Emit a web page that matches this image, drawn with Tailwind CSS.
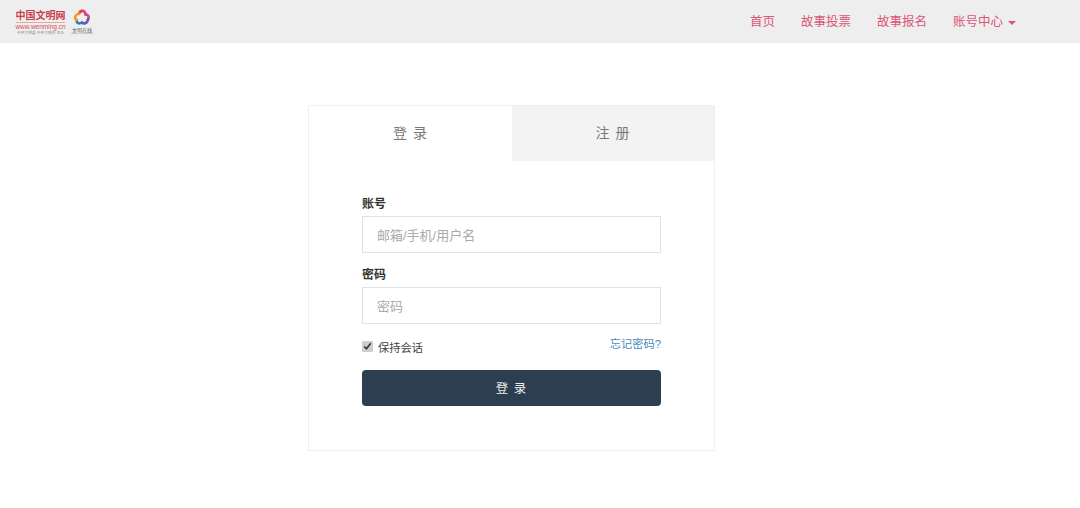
<!DOCTYPE html>
<html lang="zh-CN">
<head>
  <meta charset="UTF-8" />
  <title>登录</title>
  <script src="https://cdn.jsdelivr.net/npm/@tailwindcss/browser@4"></script>
</head>
<body class="bg-white h-[508px] overflow-hidden font-['Liberation_Sans','Noto_Sans_CJK_SC',sans-serif]">
  <!-- Navbar -->
  <nav class="h-[43px] bg-[#eeeeee] flex items-center justify-between">
    <div class="flex items-start pl-4 pt-[9px] gap-[6px] h-full">
      <div class="w-[49px] flex flex-col items-center pt-px">
        <div class="text-[10px] leading-[11px] font-bold text-[#c9404c] whitespace-nowrap">中国文明网</div>
        <div class="w-full h-px bg-[#e8a5aa] mt-px"></div>
        <div class="text-[6.5px] leading-[6px] mt-[1px] text-[#cf5560] whitespace-nowrap">www.wenming.cn</div>
        <div class="text-[3.75px] leading-[5px] mt-[1px] text-[#888] whitespace-nowrap">中央文明委 中央文明办 主办</div>
      </div>
      <div class="w-[22px] flex flex-col items-center">
        <svg width="18" height="17" viewBox="0 0 18 17" fill="none" stroke-width="2.6" stroke-linecap="round">
          <path d="M6 4.5 C7 2 8.5 1.5 10 2" stroke="#d8403a" />
          <path d="M10 2 C12 2.5 12.5 4 12.5 5.5" stroke="#e2486e" />
          <path d="M12.5 5.5 C15.5 5.5 16.5 8 15 10.5" stroke="#c44a90" />
          <path d="M15 10.5 C14.5 14 11 15.5 9 13.5" stroke="#6a5ab0" />
          <path d="M9 13.5 C6 15.5 3.5 14 3.5 11" stroke="#2f78c0" />
          <path d="M3.5 11 C1 9 2 5.5 6 4.5" stroke="#ee9a30" />
        </svg>
        <div class="text-[5px] leading-[4px] mt-[2px] text-[#666] whitespace-nowrap">文明在线</div>
        <div class="text-[2.5px] leading-[3px] text-[#999] whitespace-nowrap">WENMING ONLINE</div>
      </div>
    </div>
    <ul class="flex items-center text-[12.5px] text-[#dc5576] mr-[64px] gap-[26px] pt-[2px]">
      <li>首页</li>
      <li>故事投票</li>
      <li>故事报名</li>
      <li class="flex items-center gap-[5px]">账号中心 <span class="w-0 h-0 border-x-[4px] border-x-transparent border-t-[4px] border-t-[#dc5576]"></span></li>
    </ul>
  </nav>

  <!-- Login card -->
  <div class="w-[407px] h-[346px] mt-[62px] ml-[308px] border border-[#edf0f4]">
    <div class="flex h-[55px] text-[14px] text-[#777] tracking-[1px]">
      <div class="w-[203px] flex items-center justify-center bg-white">登 录</div>
      <div class="flex-1 flex items-center justify-center bg-[#f3f3f3]">注 册</div>
    </div>
    <form class="w-[299px] ml-[53px] pt-[34px]">
      <label class="block text-[12px] leading-[17px] font-bold text-[#333] pt-px mb-[3px]">账号</label>
      <input type="text" placeholder="邮箱/手机/用户名" class="block w-full h-[37px] px-[14px] pt-px border border-[#dde1e8] text-[13px] placeholder:text-[#aaaaaa]" />
      <label class="block text-[12px] leading-[17px] font-bold text-[#333] pt-px mt-[13px] mb-[3px]">密码</label>
      <input type="text" placeholder="密码" class="block w-full h-[37px] px-[14px] pt-px border border-[#dde1e8] text-[13px] placeholder:text-[#aaaaaa]" />
      <div class="flex justify-between mt-[11px] h-[35px]">
        <label class="flex items-start gap-[5px] text-[11.25px] leading-[17px] text-[#444] pt-[3px] mt-[2px]">
          <input type="checkbox" checked class="w-[11px] h-[11px] mt-px accent-[#cfcfcf]" />
          保持会话
        </label>
        <a class="text-[11.25px] leading-[17px] text-[#4a8ab8] pt-px">忘记密码?</a>
      </div>
      <button type="button" class="block w-full h-[36px] rounded-[4px] bg-[#2c3e50] text-[#eeeeee] text-[12.5px] tracking-[1px] pt-[2px]">登 录</button>
    </form>
  </div>
</body>
</html>
